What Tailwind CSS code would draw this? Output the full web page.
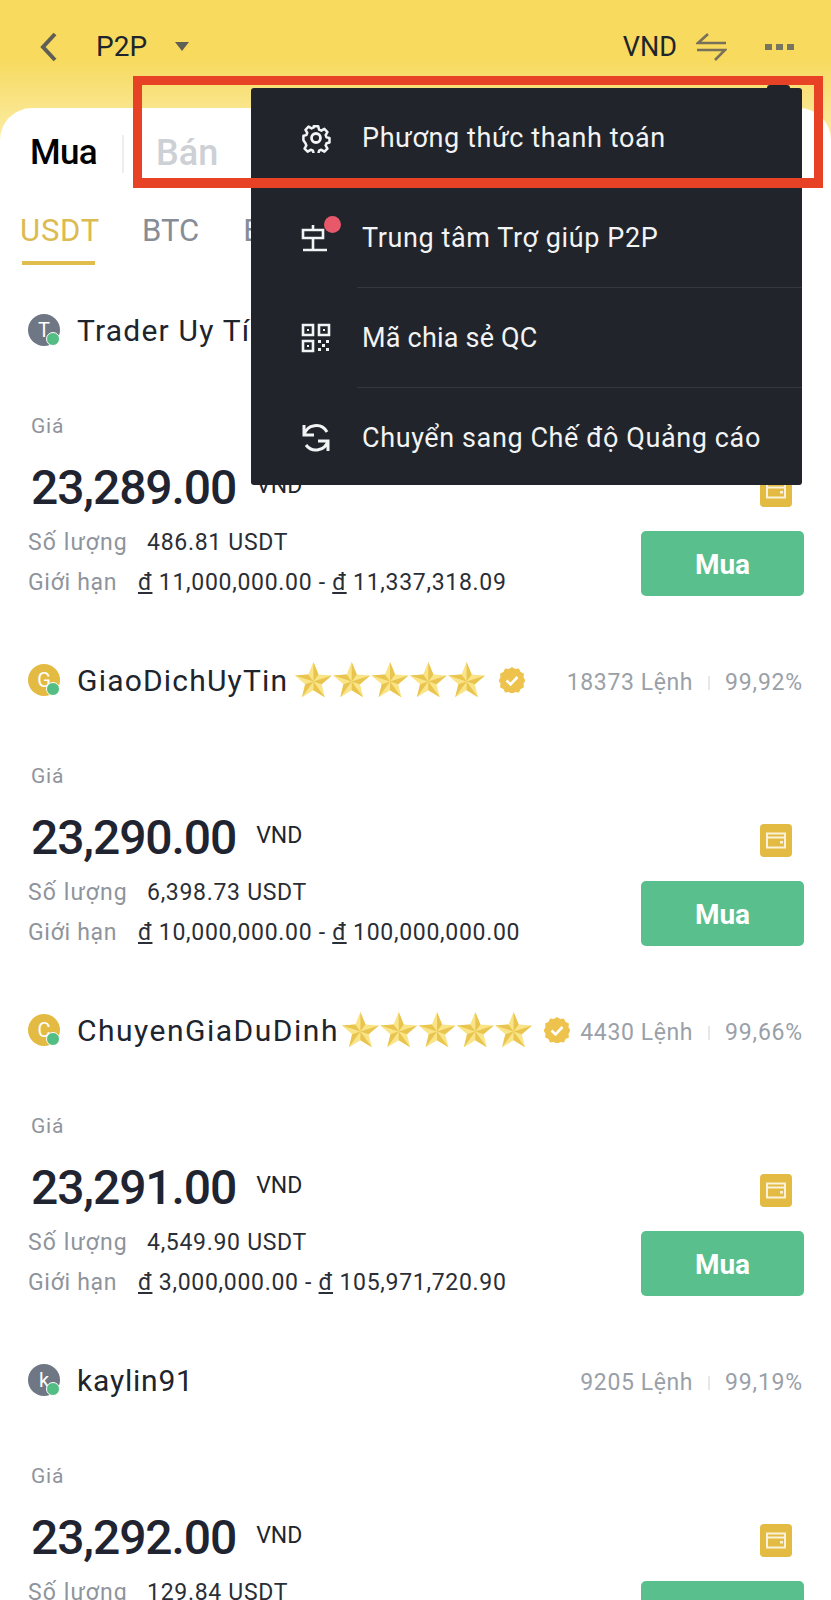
<!DOCTYPE html>
<html lang="vi"><head><meta charset="utf-8"><script src="https://cdn.jsdelivr.net/npm/@tailwindcss/browser@4"></script></head>
<body class="bg-white">
<svg width="0" height="0" class="absolute"><defs>
<g id="star"><path d="M19 1L24 13.120 37.070 14.130 27.080 22.630 30.170 35.370 19 28.500 7.830 35.370 10.920 22.630.93 14.130 14 13.120z" fill="#f9e587"/><path d="M19 20L19 1 24 13.120zM19 20L37.070 14.130 27.080 22.630zM19 20L30.170 35.370 19 28.500zM19 20L7.830 35.370 10.920 22.630zM19 20L.93 14.130 14 13.120z" fill="#e9c44f"/></g>
<g id="badge"><path d="M13 0l3.200 2 3.700-.4 1.700 3.300 3.300 1.700-.4 3.700 2 3.200-2 3.200.4 3.700-3.300 1.700-1.700 3.300-3.700-.4-3.200 2-3.200-2-3.700.4-1.700-3.300-3.300-1.700.4-3.700-2-3.200 2-3.200-.4-3.700 3.300-1.700 1.700-3.300 3.700.4z" fill="#edc34d"/><path d="M7.500 13.500l4 3.800 7-7.300" fill="none" stroke="#fff" stroke-width="2.600"/></g>
<g id="wal"><rect width="32" height="33" rx="4" fill="#e3bb42"/><path d="M7 9.500h18v14H7zM7 13.500h18" fill="none" stroke="#fff" stroke-opacity=".8" stroke-width="2"/><rect x="20" y="17" width="3" height="2.500" fill="#fff" fill-opacity=".8"/></g>
</defs></svg>
<div class="relative w-[831px] h-[1600px] overflow-hidden bg-gradient-to-b from-[#f7da5e] from-[60px] to-[#fae998] to-[125px] font-['Roboto',sans-serif]">
  <!-- header -->
  <header class="h-[108px] flex items-start pt-[27px] pl-[36px] pr-[37px] text-[#20242c]">
    <svg width="24" height="40" viewBox="0 0 24 40" class="shrink-0"><path d="M19 7L7 20l12 13" fill="none" stroke="#5f5f55" stroke-width="4"/></svg>
    <span class="ml-[36px] w-[79px] text-[28px] leading-[40px]">P2P</span>
    <svg width="14" height="9" viewBox="0 0 14 9" class="mt-[15px] shrink-0"><path d="M0 0h14L7 9z" fill="#5f5f55"/></svg>
    <span class="ml-auto text-[27px] leading-[40px]">VND</span>
    <svg width="31" height="28" viewBox="0 0 31 28" class="ml-[19px] mt-[6px] shrink-0"><path d="M12 1L2 10h28M1 17h28l-10 10" fill="none" stroke="#77705a" stroke-width="2.600"/></svg>
    <div class="ml-[38px] mt-[17px] flex gap-[4px] shrink-0"><i class="block w-[7px] h-[6px] bg-[#77745f]"></i><i class="block w-[7px] h-[6px] bg-[#77745f]"></i><i class="block w-[7px] h-[6px] bg-[#77745f]"></i></div>
  </header>
  <main class="bg-white rounded-t-[32px] h-[1492px]">
    <div class="h-[89px] pl-[30px] pt-[22px] flex items-start">
      <span class="text-[35px] leading-[46px] font-medium tracking-[-0.6px] text-black w-[92px]">Mua</span>
      <i class="block w-[2px] h-[38px] mt-[5px] bg-[#eceef0]"></i>
      <span class="ml-[32px] text-[36px] leading-[46px] font-medium text-[#cdd0d5]">Bán</span>
    </div>
    <nav class="h-[108px] pl-[20px] flex items-start text-[31px] leading-[40px] pt-[14px]">
      <div class="w-[122px]"><div class="text-[#dcbb50] tracking-[0.8px]">USDT</div><i class="block mt-[10px] ml-[2px] w-[73px] h-[4px] bg-[#e0bd4c]"></i></div>
      <span class="text-[#878d96]">BTC</span><span class="ml-[44px] text-[#878d96]">BUSD</span>
    </nav>
    <!-- rows -->
    <section class="h-[350px] px-[28px]">
      <div class="h-[50px] flex items-center">
        <div class="relative w-[32px] h-[32px] rounded-full bg-[#6f7684] text-white text-[20px] leading-[32px] text-center shrink-0">T<i class="absolute right-0 bottom-0 w-[14px] h-[14px] rounded-full bg-[#53bd83] border border-white"></i></div>
        <span class="ml-[17px] text-[30px] tracking-[1.2px] text-[#20242c] whitespace-nowrap">Trader Uy Tín</span>
        <span class="ml-auto mt-[6px] text-[23px] text-[#9aa0a8] tracking-[0.8px]">99,50%</span>
      </div>
      <div class="mt-[56px] flex justify-between">
        <div>
          <div class="h-[30px] ml-[3px] text-[21px] leading-[30px] text-[#8f949c] tracking-[0.8px]">Giá</div>
          <div class="mt-[17px] h-[60px] ml-[3px] flex items-start"><span class="text-[48px] leading-[60px] font-medium text-[#1f2430] tracking-[-1.1px]">23,289.00</span><span class="ml-[20px] mt-[13px] text-[23px] leading-[30px] text-[#20242c]">VND</span></div>
          <div class="mt-[5px] h-[40px] flex items-center text-[23px] tracking-[0.7px] text-[#8f949c]"><span class="w-[119px] tracking-[1.1px]">Số lượng</span><span class="text-[#2a2e36]">486.81 USDT</span></div>
          <div class="h-[40px] flex items-center text-[23px] tracking-[0.7px] text-[#8f949c]"><span class="w-[110px]">Giới hạn</span><span class="text-[#2a2e36]"><u>đ</u> 11,000,000.00 - <u>đ</u> 11,337,318.09</span></div>
        </div>
        <div class="w-[163px] flex flex-col items-end pt-[63px]">
          <svg width="32" height="33" class="mr-[11px]"><use href="#wal"/></svg>
          <button class="mt-[24px] -mr-px w-[163px] h-[65px] pt-[2px] rounded-[5px] bg-[#58bf8d] text-white text-[28px] font-bold">Mua</button>
        </div>
      </div>
    </section>
    <section class="h-[350px] px-[28px]">
      <div class="h-[50px] flex items-center">
        <div class="relative w-[32px] h-[32px] rounded-full bg-[#e3bb42] text-white text-[20px] leading-[32px] text-center shrink-0">G<i class="absolute right-0 bottom-0 w-[14px] h-[14px] rounded-full bg-[#53bd83] border border-white"></i></div>
        <span class="ml-[17px] text-[30px] tracking-[1.2px] text-[#20242c] whitespace-nowrap">GiaoDichUyTin</span>
        <svg width="192" height="39" viewBox="0 0 188 38" class="ml-[6px] shrink-0"><use href="#star"/><use href="#star" x="37.500"/><use href="#star" x="75"/><use href="#star" x="112.500"/><use href="#star" x="150"/></svg>
        <svg width="26" height="26" class="ml-[13px] shrink-0"><use href="#badge"/></svg>
        <span class="ml-auto mt-[6px] text-[23px] tracking-[0.6px] text-[#9aa0a8] whitespace-nowrap">18373 Lệnh</span><i class="block mt-[6px] mx-[15px] w-[2px] h-[14px] bg-[#e6e8ea]"></i><span class="mt-[6px] text-[23px] tracking-[0.8px] text-[#9aa0a8]">99,92%</span>
      </div>
      <div class="mt-[56px] flex justify-between">
        <div>
          <div class="h-[30px] ml-[3px] text-[21px] leading-[30px] text-[#8f949c] tracking-[0.8px]">Giá</div>
          <div class="mt-[17px] h-[60px] ml-[3px] flex items-start"><span class="text-[48px] leading-[60px] font-medium text-[#1f2430] tracking-[-1.1px]">23,290.00</span><span class="ml-[20px] mt-[13px] text-[23px] leading-[30px] text-[#20242c]">VND</span></div>
          <div class="mt-[5px] h-[40px] flex items-center text-[23px] tracking-[0.7px] text-[#8f949c]"><span class="w-[119px] tracking-[1.1px]">Số lượng</span><span class="text-[#2a2e36]">6,398.73 USDT</span></div>
          <div class="h-[40px] flex items-center text-[23px] tracking-[0.7px] text-[#8f949c]"><span class="w-[110px]">Giới hạn</span><span class="text-[#2a2e36]"><u>đ</u> 10,000,000.00 - <u>đ</u> 100,000,000.00</span></div>
        </div>
        <div class="w-[163px] flex flex-col items-end pt-[63px]">
          <svg width="32" height="33" class="mr-[11px]"><use href="#wal"/></svg>
          <button class="mt-[24px] -mr-px w-[163px] h-[65px] pt-[2px] rounded-[5px] bg-[#58bf8d] text-white text-[28px] font-bold">Mua</button>
        </div>
      </div>
    </section>
    <section class="h-[350px] px-[28px]">
      <div class="h-[50px] flex items-center">
        <div class="relative w-[32px] h-[32px] rounded-full bg-[#e3bb42] text-white text-[20px] leading-[32px] text-center shrink-0">C<i class="absolute right-0 bottom-0 w-[14px] h-[14px] rounded-full bg-[#53bd83] border border-white"></i></div>
        <span class="ml-[17px] text-[30px] tracking-[1.5px] text-[#20242c] whitespace-nowrap">ChuyenGiaDuDinh</span>
        <svg width="192" height="39" viewBox="0 0 188 38" class="ml-[2px] shrink-0"><use href="#star"/><use href="#star" x="37.500"/><use href="#star" x="75"/><use href="#star" x="112.500"/><use href="#star" x="150"/></svg>
        <svg width="26" height="26" class="ml-[11px] shrink-0"><use href="#badge"/></svg>
        <span class="ml-auto mt-[6px] text-[23px] tracking-[0.6px] text-[#9aa0a8] whitespace-nowrap">4430 Lệnh</span><i class="block mt-[6px] mx-[15px] w-[2px] h-[14px] bg-[#e6e8ea]"></i><span class="mt-[6px] text-[23px] tracking-[0.8px] text-[#9aa0a8]">99,66%</span>
      </div>
      <div class="mt-[56px] flex justify-between">
        <div>
          <div class="h-[30px] ml-[3px] text-[21px] leading-[30px] text-[#8f949c] tracking-[0.8px]">Giá</div>
          <div class="mt-[17px] h-[60px] ml-[3px] flex items-start"><span class="text-[48px] leading-[60px] font-medium text-[#1f2430] tracking-[-1.1px]">23,291.00</span><span class="ml-[20px] mt-[13px] text-[23px] leading-[30px] text-[#20242c]">VND</span></div>
          <div class="mt-[5px] h-[40px] flex items-center text-[23px] tracking-[0.7px] text-[#8f949c]"><span class="w-[119px] tracking-[1.1px]">Số lượng</span><span class="text-[#2a2e36]">4,549.90 USDT</span></div>
          <div class="h-[40px] flex items-center text-[23px] tracking-[0.7px] text-[#8f949c]"><span class="w-[110px]">Giới hạn</span><span class="text-[#2a2e36]"><u>đ</u> 3,000,000.00 - <u>đ</u> 105,971,720.90</span></div>
        </div>
        <div class="w-[163px] flex flex-col items-end pt-[63px]">
          <svg width="32" height="33" class="mr-[11px]"><use href="#wal"/></svg>
          <button class="mt-[24px] -mr-px w-[163px] h-[65px] pt-[2px] rounded-[5px] bg-[#58bf8d] text-white text-[28px] font-bold">Mua</button>
        </div>
      </div>
    </section>
    <section class="h-[350px] px-[28px]">
      <div class="h-[50px] flex items-center">
        <div class="relative w-[32px] h-[32px] rounded-full bg-[#6f7684] text-white text-[20px] leading-[32px] text-center shrink-0">k<i class="absolute right-0 bottom-0 w-[14px] h-[14px] rounded-full bg-[#53bd83] border border-white"></i></div>
        <span class="ml-[17px] text-[30px] tracking-[0.8px] text-[#20242c] whitespace-nowrap">kaylin91</span>
        <span class="ml-auto mt-[6px] text-[23px] tracking-[0.6px] text-[#9aa0a8] whitespace-nowrap">9205 Lệnh</span><i class="block mt-[6px] mx-[15px] w-[2px] h-[14px] bg-[#e6e8ea]"></i><span class="mt-[6px] text-[23px] tracking-[0.8px] text-[#9aa0a8]">99,19%</span>
      </div>
      <div class="mt-[56px] flex justify-between">
        <div>
          <div class="h-[30px] ml-[3px] text-[21px] leading-[30px] text-[#8f949c] tracking-[0.8px]">Giá</div>
          <div class="mt-[17px] h-[60px] ml-[3px] flex items-start"><span class="text-[48px] leading-[60px] font-medium text-[#1f2430] tracking-[-1.1px]">23,292.00</span><span class="ml-[20px] mt-[13px] text-[23px] leading-[30px] text-[#20242c]">VND</span></div>
          <div class="mt-[5px] h-[40px] flex items-center text-[23px] tracking-[0.7px] text-[#8f949c]"><span class="w-[119px] tracking-[1.1px]">Số lượng</span><span class="text-[#2a2e36]">129.84 USDT</span></div>
        </div>
        <div class="w-[163px] flex flex-col items-end pt-[63px]">
          <svg width="32" height="33" class="mr-[11px]"><use href="#wal"/></svg>
          <button class="mt-[24px] -mr-px w-[163px] h-[65px] pt-[2px] rounded-[5px] bg-[#58bf8d] text-white text-[28px] font-bold">Mua</button>
        </div>
      </div>
    </section>
  </main>
  <!-- popup menu -->
  <div class="absolute left-[251px] top-[88px] w-[551px] h-[397px] rounded-[3px] bg-[#21242a] text-[#f2f3f4] text-[27px] tracking-[0.6px]">
    <i class="absolute right-[12px] -top-[3px] w-[23px] h-[4px] rounded-t-[3px] bg-[#21242a]"></i>
    <div class="h-[100px] flex items-center pl-[50px]">
      <svg width="30" height="30" viewBox="0 0 30 30" class="shrink-0" fill="none" stroke="#f2f3f4" stroke-width="2.800" stroke-linejoin="round"><path d="M12.500 2h5l.9 3.800 2.500 1.100 3.400-2 3.400 3.500-2 3.300 1 2.600 3.300.7v5l-3.300.8-1 2.500 2 3.400-3.400 3.400-3.400-2-2.500 1-.9 3.900h-5l-.9-3.900-2.500-1-3.400 2-3.400-3.400 2-3.400-1-2.500L1 17.500v-5l3.300-.7 1-2.600-2-3.300 3.400-3.500 3.400 2 2.500-1.100z" transform="translate(1.500 1.500) scale(.9)"/><circle cx="15" cy="15" r="4.500"/></svg>
      <span class="ml-[31px] whitespace-nowrap">Phương thức thanh toán</span>
    </div>
    <div class="h-[100px] flex items-center pl-[50px]">
      <div class="relative w-[30px] h-[30px] shrink-0">
        <svg width="30" height="30" viewBox="0 0 30 30" fill="none" stroke="#f2f3f4" stroke-width="2.600"><path d="M2 7h20v8H2zM12 2v5M12 15v12M2 27h24"/></svg>
        <i class="absolute -right-[10px] -top-[7px] w-[17px] h-[17px] rounded-full bg-[#e8586b]"></i>
      </div>
      <span class="ml-[31px] whitespace-nowrap">Trung tâm Trợ giúp P2P</span>
    </div>
    <div class="relative h-[100px] flex items-center pl-[50px] before:absolute before:left-[106px] before:right-0 before:top-[-1px] before:h-px before:bg-[#33373e]">
      <svg width="30" height="30" viewBox="0 0 30 30" fill="none" stroke="#f2f3f4" stroke-width="2.600" class="shrink-0"><path d="M2 2h10v10H2zM18 2h10v10H18zM2 18h10v10H2z"/><path d="M6 6h2v2H6zM22 6h2v2h-2zM6 22h2v2H6z" fill="#f2f3f4" stroke="none"/><path d="M17 17h3v3h-3zM25 17h3v3h-3zM21 21h3v3h-3zM17 25h3v3h-3zM25 25h3v3h-3z" fill="#f2f3f4" stroke="none"/></svg>
      <span class="ml-[31px] whitespace-nowrap tracking-[0.2px]">Mã chia sẻ QC</span>
    </div>
    <div class="relative h-[97px] flex items-center pt-[3px] pl-[50px] before:absolute before:left-[106px] before:right-0 before:top-[-1px] before:h-px before:bg-[#33373e]">
      <svg width="30" height="30" viewBox="0 0 30 30" fill="none" stroke="#f2f3f4" stroke-width="3" class="shrink-0"><path d="M3 12A12.500 12.500 0 0 1 26 9M3 2v10h10M27 18A12.500 12.500 0 0 1 5 22M27 28V18H17"/></svg>
      <span class="ml-[31px] whitespace-nowrap">Chuyển sang Chế độ Quảng cáo</span>
    </div>
  </div>
  <!-- annotation -->
  <div class="absolute left-[133px] top-[76px] w-[690px] h-[112px] border-[#e84226] border-x-[9px] border-t-[9px] border-b-[10px]"></div>
</div>
</body></html>
